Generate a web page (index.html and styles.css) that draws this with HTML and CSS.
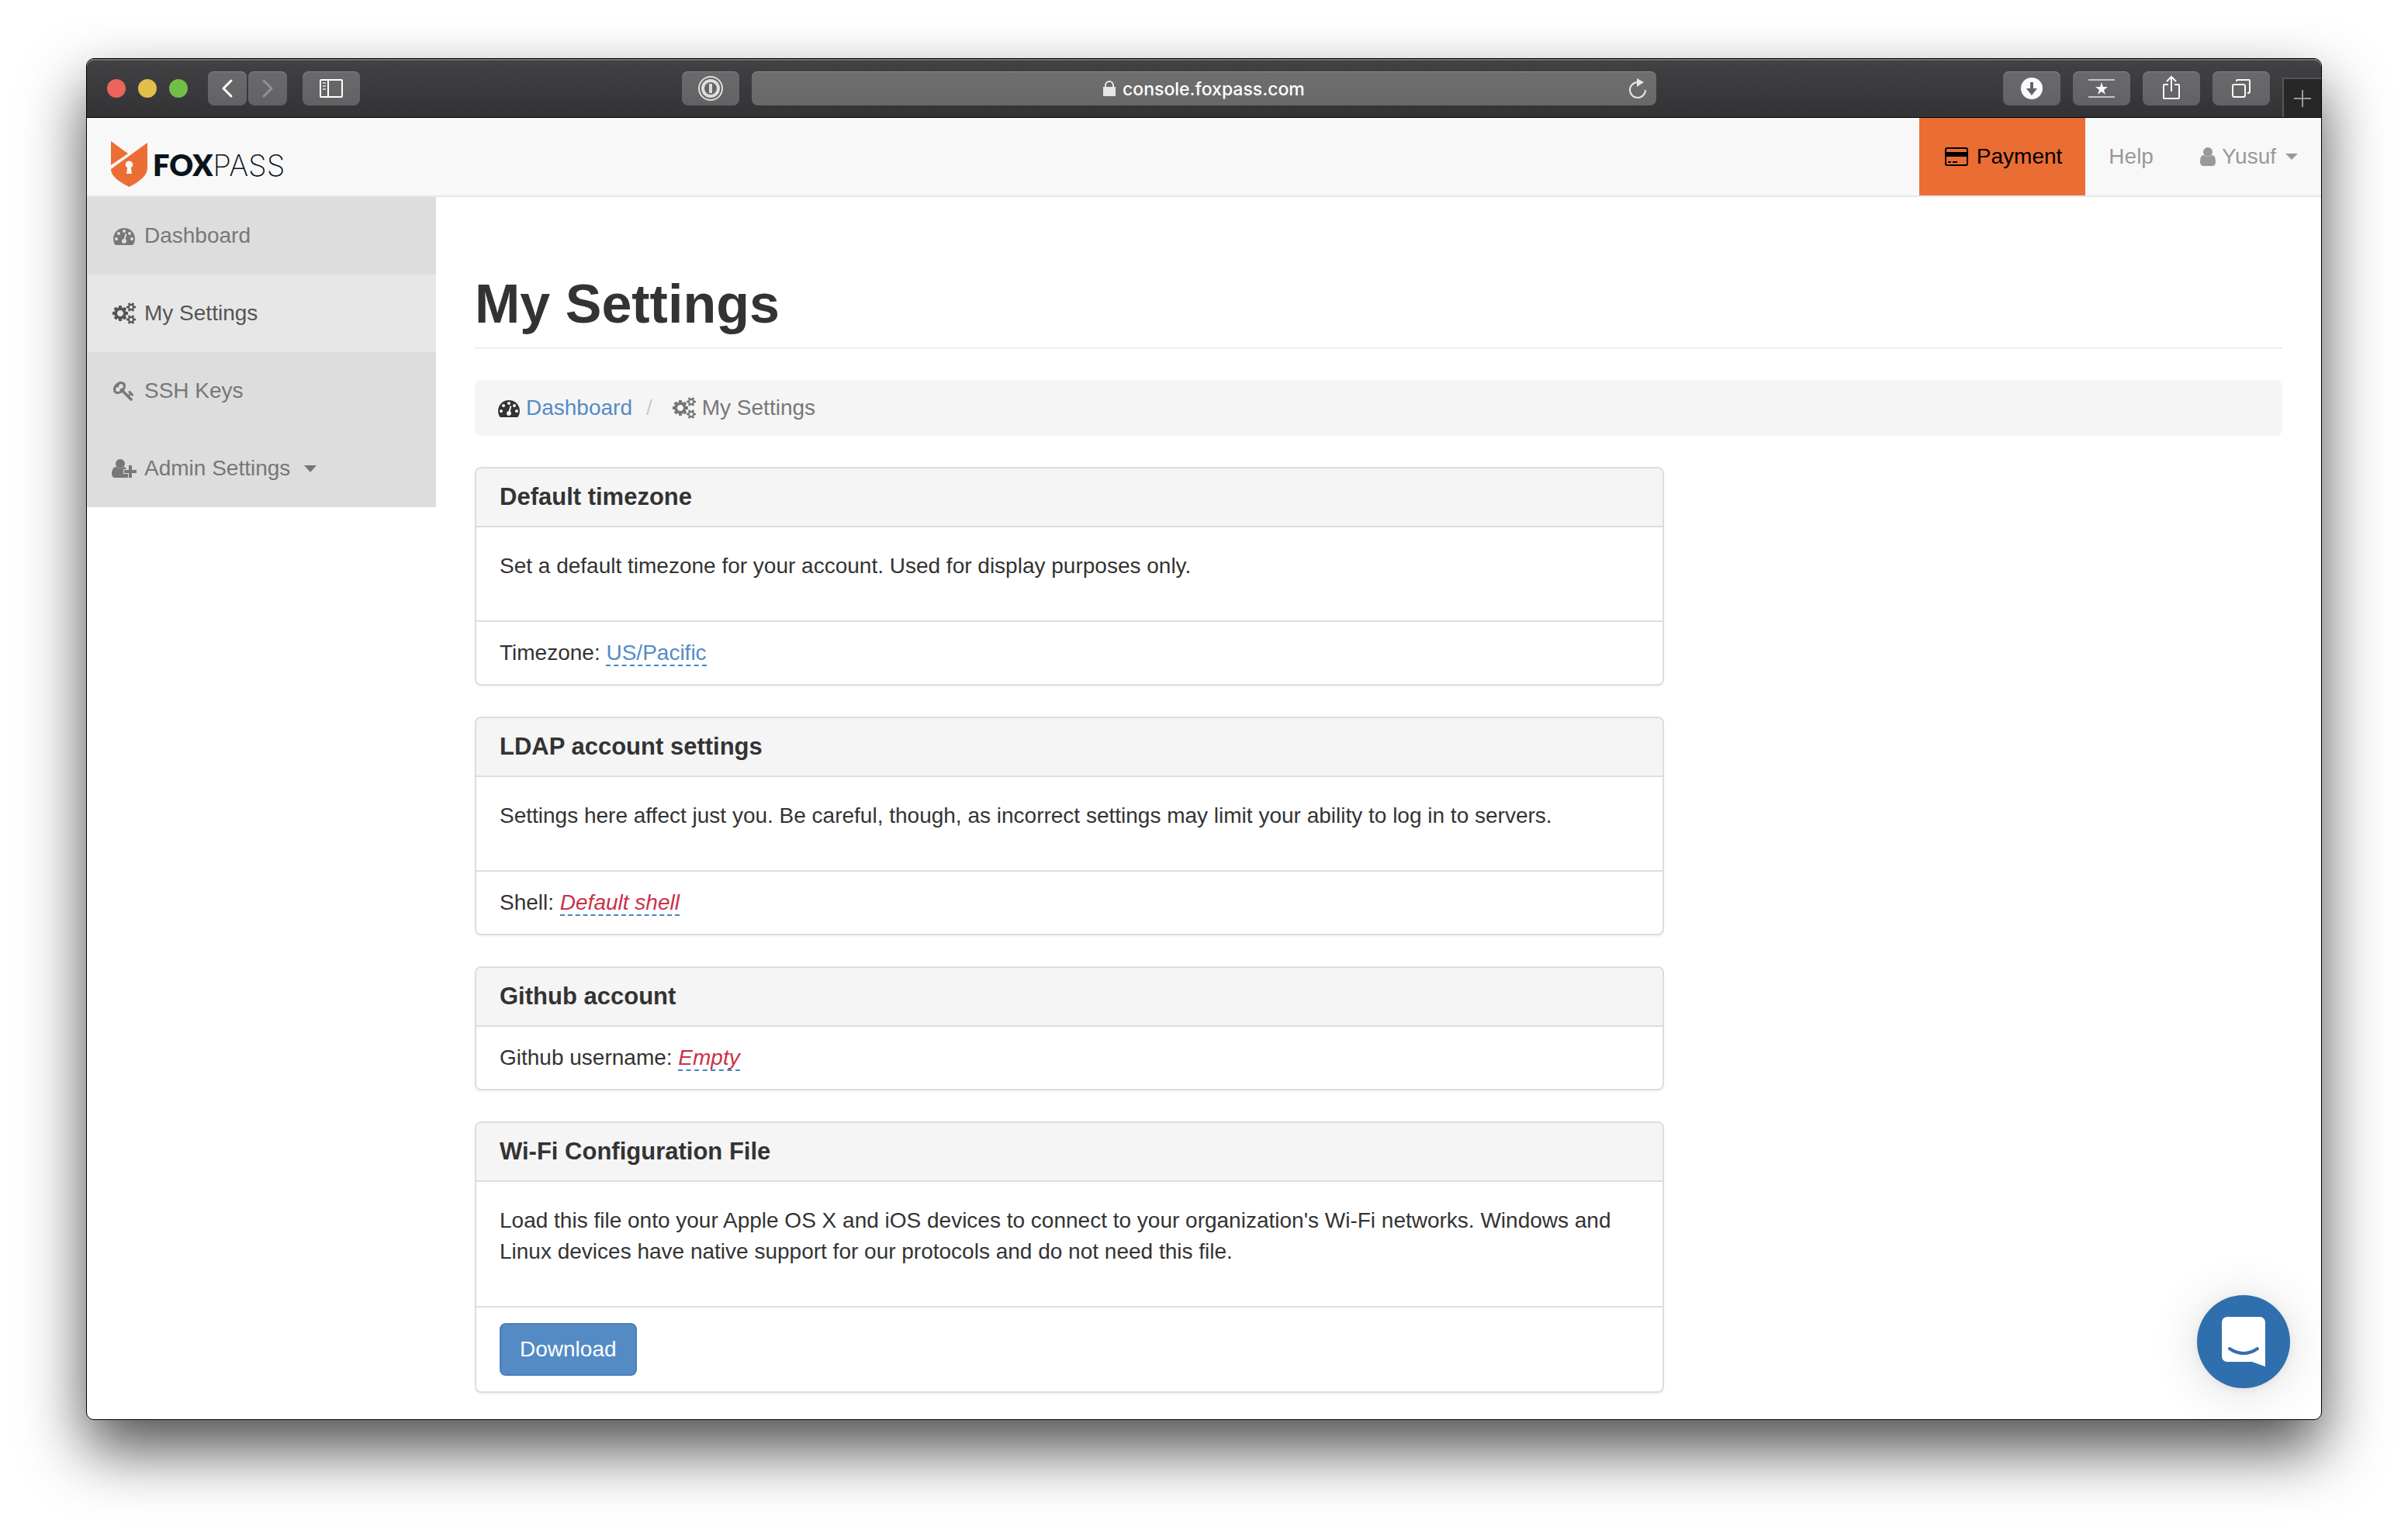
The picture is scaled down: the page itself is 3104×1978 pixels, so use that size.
FILE: index.html
```html
<!DOCTYPE html>
<html lang="en">
<head>
<meta charset="utf-8">
<title>My Settings - Foxpass</title>
<link rel="stylesheet" href="styles.css">
</head>
<body>
<svg class="sprite" aria-hidden="true">
  <symbol id="tachometer" viewBox="0 0 1792 1792"><path d="M384 1152q0-53-37.500-90.500t-90.500-37.500-90.500 37.500-37.500 90.500 37.500 90.500 90.500 37.500 90.500-37.500 37.500-90.500zm192-448q0-53-37.500-90.500t-90.500-37.500-90.500 37.500-37.500 90.500 37.500 90.500 90.500 37.500 90.500-37.500 37.500-90.500zm428 481l101-382q6-26-7.500-48.500t-38.500-29.500-48 6.500-30 39.500l-101 382q-60 5-107 43.500t-63 98.500q-20 77 20 146t117 89 146-20 89-117q16-60-6-117t-72-91zm660-33q0-53-37.500-90.500t-90.500-37.500-90.500 37.500-37.500 90.500 37.500 90.500 90.500 37.500 90.500-37.500 37.500-90.500zm-640-640q0-53-37.500-90.500t-90.500-37.500-90.500 37.500-37.500 90.500 37.500 90.500 90.500 37.500 90.500-37.500 37.500-90.500zm448 192q0-53-37.500-90.500t-90.500-37.500-90.500 37.500-37.500 90.500 37.500 90.500 90.500 37.500 90.500-37.500 37.500-90.500zm320 448q0 261-141 483-19 29-54 29h-1402q-35 0-54-29-141-221-141-483 0-182 71-348t191-286 286-191 348-71 348 71 286 191 191 286 71 348z"/></symbol>
  <symbol id="cogs" viewBox="-64 0 1920 1792"><path d="M832 896q0-106-75-181t-181-75-181 75-75 181 75 181 181 75 181-75 75-181zm768 512q0-52-38-90t-90-38-90 38-38 90q0 53 37.500 90.500t90.500 37.500 90.500-37.500 37.500-90.500zm0-1024q0-52-38-90t-90-38-90 38-38 90q0 53 37.500 90.500t90.500 37.500 90.500-37.500 37.500-90.500zm-384 421v185q0 10-7 19.500t-16 10.500l-155 24q-11 35-32 76 34 48 90 115 7 11 7 20 0 12-7 19-23 30-82.500 89.500t-78.500 59.500q-11 0-21-7l-115-90q-37 19-77 31-11 108-23 155-7 24-30 24h-186q-11 0-20-7.500t-10-17.500l-23-153q-34-10-75-31l-118 89q-7 7-20 7-11 0-21-8-144-133-144-160 0-9 7-19 10-14 41-53t47-61q-23-44-35-82l-152-24q-10-1-17-9.500t-7-19.500v-185q0-10 7-19.500t16-10.500l155-24q11-35 32-76-34-48-90-115-7-11-7-20 0-12 7-20 22-30 82-89t79-59q11 0 21 7l115 90q34-18 77-32 11-108 23-154 7-24 30-24h186q11 0 20 7.500t10 17.500l23 153q34 10 75 31l118-89q8-7 20-7 11 0 21 8 144 133 144 160 0 8-7 19-12 16-42 54t-45 60q23 48 34 82l152 23q10 2 17 10.500t7 19.500zm640 533v140q0 16-149 31-12 27-30 52 51 113 51 138 0 4-4 7-122 71-124 71-8 0-46-47t-52-68q-20 2-30 2t-30-2q-14 21-52 68t-46 47q-2 0-124-71-4-3-4-7 0-25 51-138-18-25-30-52-149-15-149-31v-140q0-16 149-31 13-29 30-52-51-113-51-138 0-4 4-7 4-2 35-20t59-34 30-16q8 0 46 46.500t52 67.500q20-2 30-2t30 2q51-71 92-112l6-2q4 0 124 70 4 3 4 7 0 25-51 138 17 23 30 52 149 15 149 31zm0-1024v140q0 16-149 31-12 27-30 52 51 113 51 138 0 4-4 7-122 71-124 71-8 0-46-47t-52-68q-20 2-30 2t-30-2q-14 21-52 68t-46 47q-2 0-124-71-4-3-4-7 0-25 51-138-18-25-30-52-149-15-149-31v-140q0-16 149-31 13-29 30-52-51-113-51-138 0-4 4-7 4-2 35-20t59-34 30-16q8 0 46 46.500t52 67.500q20-2 30-2t30 2q51-71 92-112l6-2q4 0 124 70 4 3 4 7 0 25-51 138 17 23 30 52 149 15 149 31z"/></symbol>
</svg>

<div class="window">
  <header class="toolbar">
    <div class="toolbar-left">
      <div class="lights">
        <button class="light light-close" aria-label="Close window"></button>
        <button class="light light-min" aria-label="Minimize window"></button>
        <button class="light light-max" aria-label="Zoom window"></button>
      </div>
      <div class="history">
        <button class="tool tool-narrow" aria-label="Back"><svg width="50" height="44" fill="none" stroke="#fff" stroke-width="3" stroke-linecap="round" stroke-linejoin="round"><path d="M30 12 20 22l10 10"/></svg></button>
        <button class="tool tool-narrow" aria-label="Forward"><svg width="50" height="44" fill="none" stroke="#919193" stroke-width="3" stroke-linecap="round" stroke-linejoin="round"><path d="M20 12l10 10-10 10"/></svg></button>
      </div>
      <button class="tool" aria-label="Show sidebar"><svg width="74" height="44" fill="none" stroke="#fff" stroke-width="2"><rect x="23" y="11" width="28" height="22" rx="1"/><path d="M33 11v22"/><path stroke="#c4c4c6" d="M26 15h4M26 19h4M26 23h4"/></svg></button>
      <button class="tool tool-password" aria-label="1Password"><svg width="74" height="44" fill="none" stroke="#dededf"><circle cx="37" cy="22" r="15" stroke-width="2"/><circle cx="37" cy="22" r="10" stroke-width="4"/><path stroke-width="4" d="M37 16v12"/></svg></button>
    </div>
    <div class="address">
      <label class="address-label" for="url"><svg width="18" height="22" aria-label="Secure address"><path d="M1 9h16v12H1z" fill="#e6e6e6"/><path d="M4 10V7a5 5 0 0 1 10 0v3" fill="none" stroke="#e6e6e6" stroke-width="2"/></svg></label>
      <input class="address-input" id="url" type="text" value="console.foxpass.com">
      <button class="reload" aria-label="Reload"><svg width="24" height="28"><path d="M22 16a10 10 0 1 1-10-10" fill="none" stroke="#e6e6e6" stroke-width="2"/><path d="M11 1l9 5-9 6z" fill="#e6e6e6"/></svg></button>
    </div>
    <div class="toolbar-right">
      <button class="tool" aria-label="Downloads"><svg width="74" height="44"><circle cx="37" cy="22" r="14" fill="#fafafc"/><path d="M35 14h4v8h5l-7 9-7-9h5z" fill="#626264"/></svg></button>
      <button class="tool" aria-label="Favorites"><svg width="74" height="44"><path d="M20 11h34M20 33h34" stroke="#c4c4c6" stroke-width="2"/><path d="M37 14l2 6h6l-5 4 2 6-5-4-5 4 2-6-5-4h6z" fill="#fafafc"/></svg></button>
      <button class="tool" aria-label="Share"><svg width="74" height="44" fill="none" stroke="#fafafc" stroke-width="2"><path d="M33 17h-5a1 1 0 0 0-1 1v16a1 1 0 0 0 1 1h18a1 1 0 0 0 1-1V18a1 1 0 0 0-1-1h-5M37 26V8M31 13l6-6 6 6"/></svg></button>
      <button class="tool" aria-label="Show tabs"><svg width="74" height="44" fill="none" stroke="#fafafc" stroke-width="2"><rect x="26" y="17" width="16" height="16" rx="2"/><path d="M31 13v-1a1 1 0 0 1 1-1h15a1 1 0 0 1 1 1v14a2 2 0 0 1-2 2h-1"/></svg></button>
      <button class="new-tab" aria-label="New tab"><svg width="22" height="22" stroke="#9b9b9b" stroke-width="2"><path d="M11 0v22M0 11h22"/></svg></button>
    </div>
  </header>

  <nav class="navbar">
    <a class="brand" href="#">
      <svg class="brand-mark" width="48" height="60" viewBox="0 0 48 60"><path d="M0 0l22 16L0 31z"/><path fill-rule="evenodd" d="M47 2v33c0 10-12 18-23.500 24C12 53 0 46 0 36zM23.500 25.500a4.700 4.700 0 0 0-2.300 8.800L20 42h7l-1.200-7.700a4.700 4.700 0 0 0-2.300-8.800z"/></svg>
      <span class="brand-name"><b>FOX</b><span>PASS</span></span>
    </a>
    <ul class="nav-links">
      <li><a class="nav-link nav-payment" href="#"><span class="icon-slot"><svg width="30" height="28"><rect x="1" y="3" width="28" height="22" rx="2" fill="none" stroke="currentColor" stroke-width="2"/><path d="M1 8h28v6H1zM4 20h4v2H4zM10 20h6v2h-6z"/></svg></span>Payment</a></li>
      <li><a class="nav-link" href="#">Help</a></li>
      <li><a class="nav-link" href="#"><svg width="20" height="28"><circle cx="10" cy="8" r="6"/><path d="M5 12c-4 0-5 4-5 9 0 3 2 5 4 5h12c2 0 4-2 4-5 0-5-1-9-5-9-3 3-7 3-10 0z"/></svg>Yusuf<span class="caret"></span></a></li>
    </ul>
  </nav>

  <div class="layout">
    <nav class="sidebar">
      <a class="side-link" href="#"><span class="icon-slot"><svg width="28" height="28"><use href="#tachometer"/></svg></span>Dashboard</a>
      <a class="side-link active" href="#"><span class="icon-slot"><svg width="30" height="28"><use href="#cogs"/></svg></span>My Settings</a>
      <a class="side-link" href="#"><span class="icon-slot"><svg width="28" height="28" viewBox="0 0 1792 1792"><path d="M832 512q0-80-56-136t-136-56-136 56-56 136q0 42 19 83-41-19-83-19-80 0-136 56t-56 136 56 136 136 56 136-56 56-136q0-42-19-83 41 19 83 19 80 0 136-56t56-136zm851 704q0 17-49 66t-66 49q-9 0-28.500-16t-36.500-33-38.500-40-24.500-26l-96 96 220 220q28 28 28 68 0 42-39 81t-81 39q-40 0-68-28l-671-671q-176 131-365 131-163 0-265.500-102.500t-102.500-265.500q0-160 95-313t248-248 313-95q163 0 265.500 102.500t102.500 265.500q0 189-131 365l355 355 96-96q-3-3-26-24.500t-40-38.500-33-36.500-16-28.500q0-17 49-66t66-49q13 0 23 10 6 6 46 44.500t82 79.500 86.500 86 73 78 28.500 41z"/></svg></span>SSH Keys</a>
      <a class="side-link" href="#"><span class="icon-slot"><svg width="32" height="28"><circle cx="11" cy="8" r="6"/><path d="M6 12c-4 0-6 4-6 9 0 3 2 5 4 5h15c1 0 2 0 2-1v-4h-6v-6h4c-1-2-2-3-3-3-3 3-7 3-10 0z"/><path d="M22 10h4v6h6v4h-6v6h-4v-6h-6v-4h6z"/></svg></span>Admin Settings<span class="caret caret-large"></span></a>
    </nav>

    <main class="main">
      <h1 class="page-title">My Settings</h1>
      <ol class="breadcrumb">
        <li><svg width="28" height="28"><use href="#tachometer"/></svg><a href="#">Dashboard</a></li>
        <li class="current"><svg width="30" height="28"><use href="#cogs"/></svg>My Settings</li>
      </ol>

      <div class="panels">
        <section class="panel">
          <h2 class="panel-title">Default timezone</h2>
          <p class="panel-body">Set a default timezone for your account. Used for display purposes only.</p>
          <div class="panel-row">Timezone: <a class="editable" href="#">US/Pacific</a></div>
        </section>
        <section class="panel">
          <h2 class="panel-title">LDAP account settings</h2>
          <p class="panel-body">Settings here affect just you. Be careful, though, as incorrect settings may limit your ability to log in to servers.</p>
          <div class="panel-row">Shell: <a class="editable unset" href="#">Default shell</a></div>
        </section>
        <section class="panel">
          <h2 class="panel-title">Github account</h2>
          <div class="panel-row">Github username: <a class="editable unset" href="#">Empty</a></div>
        </section>
        <section class="panel">
          <h2 class="panel-title">Wi-Fi Configuration File</h2>
          <p class="panel-body">Load this file onto your Apple OS X and iOS devices to connect to your organization's Wi-Fi networks. Windows and Linux devices have native support for our protocols and do not need this file.</p>
          <div class="panel-row"><button class="download">Download</button></div>
        </section>
      </div>
    </main>
  </div>

  <button class="chat" aria-label="Open chat"><svg width="120" height="120"><path d="M39 28h42a7 7 0 0 1 7 7v57l-17-6H39a7 7 0 0 1-7-7V35a7 7 0 0 1 7-7z" fill="#fff"/><path d="M42 69q18 12 36 0" fill="none" stroke="#306fad" stroke-width="4" stroke-linecap="round"/></svg></button>
</div>
</body>
</html>
```
FILE: styles.css
```css
* { box-sizing: border-box; }

body {
  display: flex;
  min-height: 100vh;
  margin: 0;
  padding: 75px 111px 147px;
  background: #fff;
  color: #333;
  font: 28px/40px "Liberation Sans", Arial, sans-serif;
}

a { color: #558bc5; text-decoration: none; }
button { margin: 0; padding: 0; border: 0; font: inherit; }
svg { display: block; flex: none; fill: currentColor; }
svg[fill="none"] { fill: none; }
ul, ol { margin: 0; padding: 0; list-style: none; }
.sprite { position: absolute; width: 0; height: 0; }

.window {
  position: relative;
  flex: 1;
  min-width: 0;
  border: 1px solid #000;
  border-radius: 10px;
  background: #fff;
  box-shadow: 0 38px 80px rgba(0, 0, 0, .69);
}

/* Browser toolbar */
.toolbar {
  display: grid;
  grid-template-columns: 1fr minmax(0, 1166px) 1fr;
  align-items: center;
  height: 76px;
  padding-top: 1px;
  border-bottom: 1px solid #000;
  border-radius: 9px 9px 0 0;
  background: linear-gradient(#424244, #333335);
  box-shadow: inset 0 2px 0 #6d6e6d;
}
.toolbar-left { display: flex; align-items: center; padding: 0 16px 0 26px; }
.lights { display: flex; gap: 16px; margin-right: 26px; }
.light { width: 24px; height: 24px; border-radius: 50%; }
.light-close { background: #ed655a; }
.light-min { background: #e0c04c; }
.light-max { background: #72be47; }
.history { display: flex; gap: 2px; margin-right: 20px; }
.tool {
  width: 74px;
  height: 44px;
  border-radius: 8px;
  background: linear-gradient(#6a6a6c, #626264);
  box-shadow: inset 0 1px 0 #838385;
}
.tool-narrow { width: 50px; }
.tool-password { margin-left: auto; }
.address {
  display: flex;
  align-items: center;
  height: 44px;
  padding: 0 12px 0 38px;
  border-radius: 8px;
  background: linear-gradient(#6f6f6f, #686868);
  box-shadow: inset 0 1px 0 #8a8a8a;
}
.address-label { margin-left: auto; }
.address-input {
  width: 238px;
  height: 42px;
  margin: 0 auto 0 8px;
  padding: 2px 0 0;
  border: 0;
  background: none;
  color: #fff;
  font: 500 23px/40px Inter, "Liberation Sans", sans-serif;
}
.reload { background: none; }
.toolbar-right { display: flex; align-items: center; justify-content: flex-end; gap: 16px; height: 100%; }
.new-tab {
  display: grid;
  place-items: center;
  align-self: flex-end;
  width: 50px;
  height: 51px;
  border: solid #565658;
  border-width: 2px 0 0 2px;
  background: #272728;
}

/* Site header */
.navbar {
  display: flex;
  justify-content: space-between;
  height: 102px;
  border-bottom: 2px solid #e7e7e7;
  background: #f8f8f8;
}
.brand { display: flex; align-items: center; gap: 6px; padding: 20px 31px 0; height: 100%; color: #0a141c; }
.brand-mark { color: #ed6e35; }
.brand-name { font: 38px/40px Inter, Lato, sans-serif; }
.brand-name b { font-family: Lato, sans-serif; font-weight: 800; }
.brand-name span { font-weight: 200; }
.nav-links { display: flex; }
.nav-link { display: flex; align-items: center; gap: 8px; height: 100px; padding: 0 30px; color: #999; }
.nav-payment { background: #ea6d34; color: #000; }
.icon-slot { display: flex; justify-content: center; flex: none; width: 36px; }
.caret {
  margin-left: 4px;
  border: solid transparent;
  border-width: 8px 8px 0;
  border-top-color: currentColor;
}
.caret-large { margin-left: 10px; border-width: 9px 8px 0; }

/* Page */
.layout { display: flex; align-items: flex-start; }
.sidebar { flex: none; width: 450px; border-left: 2px solid #e1e1e1; background: #ddd; }
.side-link { display: flex; align-items: center; gap: 8px; height: 100px; padding: 0 28px; color: #777; }
.side-link.active { background: #e7e7e7; color: #555; }
.main { flex: 1; min-width: 0; padding: 98px 50px 34px; }
.page-title {
  margin: 0 0 40px;
  padding-bottom: 16px;
  border-bottom: 2px solid #eee;
  font-size: 70px;
  line-height: 80px;
}
.breadcrumb {
  display: flex;
  margin-bottom: 40px;
  padding: 16px 30px;
  border-radius: 8px;
  background: #f5f5f5;
}
.breadcrumb li { display: flex; align-items: center; gap: 8px; }
.breadcrumb .current { color: #777; }
.breadcrumb .current::before { content: "/"; margin: 0 18px; color: #ccc; }

.panels { display: grid; gap: 40px; width: calc((100% + 60px) * 2 / 3 - 60px); }
.panel { border: 2px solid #ddd; border-radius: 8px; box-shadow: 0 2px 2px rgba(0, 0, 0, .05); }
.panel-title {
  margin: 0;
  padding: 20px 30px;
  border-radius: 6px 6px 0 0;
  background: #f5f5f5;
  font-size: 31px;
  line-height: 34px;
}
.panel-body { margin: 0; padding: 30px 30px 50px; border-top: 2px solid #ddd; }
.panel-row { padding: 20px 30px; border-top: 2px solid #ddd; }
.editable { border-bottom: 2px dashed #3d87c5; }
.unset { color: #ca3149; font-style: italic; }
.download {
  display: block;
  height: 68px;
  padding: 0 24px;
  border: 2px solid #4a7fb9;
  border-radius: 8px;
  background: #558bc4;
  color: #fff;
}

.chat {
  position: absolute;
  right: 40px;
  bottom: 40px;
  width: 120px;
  height: 120px;
  border-radius: 50%;
  background: #306fad;
  box-shadow: 0 2px 12px rgba(0, 0, 0, .06), 0 4px 64px rgba(0, 0, 0, .14);
}
```
